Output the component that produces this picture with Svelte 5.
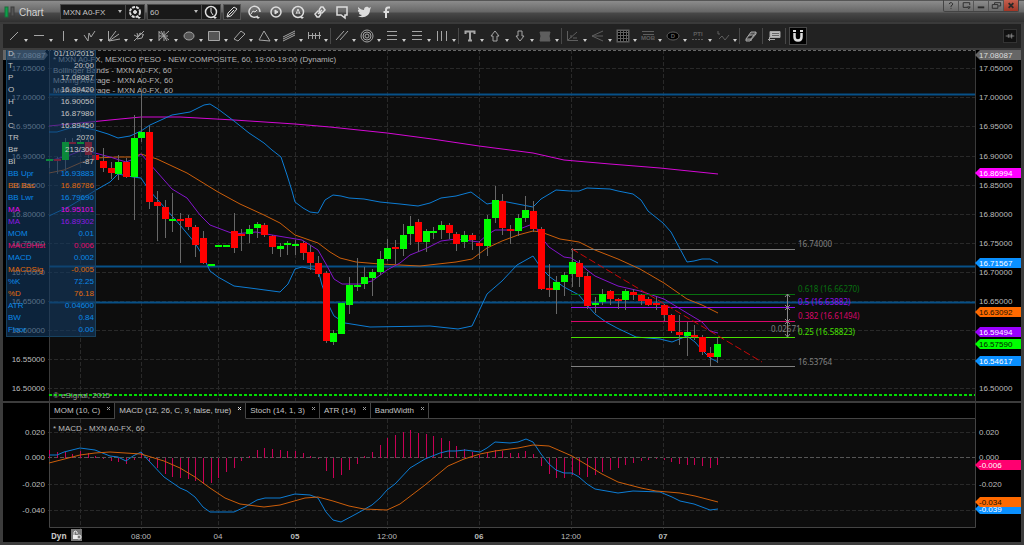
<script lang="ts">
  let symbol = $state('MXN A0-FX')
  let interval = $state('60')
  let activeTab = $state(1)
  let magnet = $state(true)

  const barX = (i: number) => 49.3 + i * 7.68

  const priceAxis = Array.from({ length: 12 }, (_, i) => ({
    label: (17.05 - i * 0.05).toFixed(5),
    y: Math.round(68.3 + i * 29.07),
  }))

  const times = [
    { label: '', x: 80, bold: false },
    { label: '08:00', x: 141, bold: false },
    { label: '04', x: 218, bold: false },
    { label: '05', x: 295, bold: true },
    { label: '12:00', x: 387, bold: false },
    { label: '06', x: 479, bold: true },
    { label: '12:00', x: 571, bold: false },
    { label: '07', x: 663, bold: true },
  ]

  // direction, high, body top, body bottom, low
  const candles: [number, number, number, number, number][] = [
    [1, 159, 159, 160, 168], [0, 157, 159, 160, 174], [1, 138, 142, 160, 171], [0, 138, 142, 143, 144],
    [1, 140, 142, 143, 144], [0, 138, 142, 155, 158], [0, 155, 155, 160, 160], [0, 148, 161, 168, 172],
    [0, 162, 168, 173, 179], [1, 155, 162, 174, 180], [0, 158, 162, 177, 178], [1, 115, 138, 177, 220],
    [1, 92, 132, 138, 142], [0, 126, 132, 202, 209], [0, 191, 202, 206, 241], [0, 200, 207, 219, 238],
    [1, 193, 219, 220, 232], [0, 213, 219, 220, 263], [0, 215, 218, 227, 230], [0, 225, 227, 245, 257],
    [0, 231, 238, 263, 264], [1, 264, 264, 265, 265], [1, 245, 245, 246, 246], [1, 245, 245, 246, 246],
    [0, 213, 231, 248, 253], [0, 229, 234, 235, 251], [1, 225, 229, 234, 243], [1, 222, 224, 228, 238],
    [0, 223, 225, 235, 237], [0, 235, 236, 247, 254], [1, 243, 246, 249, 257], [1, 241, 243, 244, 255],
    [1, 240, 244, 245, 255], [0, 241, 243, 253, 260], [0, 245, 252, 263, 270], [0, 256, 263, 274, 277],
    [0, 271, 273, 341, 343], [1, 330, 333, 342, 345], [1, 303, 303, 334, 334], [1, 277, 285, 305, 314],
    [1, 258, 285, 286, 291], [1, 267, 277, 284, 289], [1, 269, 272, 278, 296], [1, 251, 259, 272, 275],
    [1, 239, 248, 259, 261], [0, 240, 247, 249, 264], [1, 224, 235, 249, 256], [1, 216, 226, 234, 245],
    [0, 219, 222, 242, 252], [1, 229, 231, 242, 252], [1, 227, 231, 232, 239], [1, 221, 225, 230, 239],
    [0, 223, 225, 233, 239], [0, 232, 234, 244, 251], [1, 231, 235, 242, 248], [0, 233, 235, 240, 250],
    [0, 241, 243, 246, 259], [1, 215, 219, 246, 256], [1, 186, 200, 218, 223], [0, 194, 201, 228, 235],
    [0, 225, 229, 231, 244], [1, 214, 218, 231, 236], [1, 196, 210, 218, 222], [0, 201, 211, 229, 232],
    [0, 227, 229, 289, 290], [0, 264, 288, 289, 297], [1, 276, 282, 290, 314], [1, 272, 275, 282, 296],
    [1, 248, 262, 274, 287], [0, 260, 263, 277, 287], [0, 272, 276, 306, 309], [1, 297, 303, 305, 313],
    [1, 289, 294, 302, 305], [0, 290, 291, 299, 305], [0, 298, 299, 301, 309], [1, 289, 291, 300, 310],
    [0, 289, 292, 295, 300], [0, 294, 295, 301, 305], [0, 297, 299, 305, 306], [0, 297, 303, 305, 310],
    [0, 304, 305, 315, 321], [0, 314, 315, 331, 333], [0, 315, 332, 335, 345], [1, 322, 332, 336, 356],
    [0, 325, 335, 337, 340], [0, 335, 337, 352, 355], [0, 347, 353, 357, 366], [1, 338, 344, 357, 363],
  ]

  const curves = [
    { color: '#d408d4', points: '49,126 80,123 110,120 141,117 180,117 234,120 295,124 330,127 387,133 432,139 479,146 533,153 564,160 610,164 660,168 718,174' },
    { color: '#0c7cd4', points: '49,132 57,132 70,128 80,127 95,130 108,134 118,138 130,136 141,131 150,125 172,115 190,112 204,105 210,104 218,109 234,121 249,133 264,143 272,150 281,157 287,175 292,191 295,202 303,208 310,212 318,213 325,200 333,195 341,196 349,198 364,199 380,202 400,204 418,206 430,203 441,198 456,196 471,192 479,198 487,204 502,201 520,204.5 533,207 541,199 556,190 570,191 579,191 587,188 610,189 618,191 633,194 641,200 648,211 663,223 671,232 679,247 687,262 694,261 702,259 710,259 718,263' },
    { color: '#0c7cd4', points: '49,216 70,206 80,200 96,190 110,182 118,174 133,177 141,178 149,190 165,208 180,225 195,243 203,256 210,271 218,277 234,286 250,288 280,292 288,284 295,269 302,267 318,270 322,285 330,308 334,316 345,323 370,327 430,326 458,329 472,326 487,294 502,281 517,265 533,256 541,268 550,277 564,287 579,295 587,305 595,314 606,322 617,328 636,337 648,338 660,339 672,342 687,336 695,342 702,350 710,358 718,362' },
    { color: '#cc5e0a', points: '49,173 64,170 80,163 95,158 118,157 133,157 141,154 157,159 187,173 218,192 240,204 264,215 280,223 295,235 318,243 330,252 340,258 356,262 380,264 420,266 456,262 472,259 487,248 502,241 518,235 533,231 541,232 560,239 579,242 595,250 618,259 640,269 664,283 687,299 702,305 718,313' },
    { color: '#8414cc', points: '49,161 70,155 80,151 95,153 110,157 126,162 134,159 141,154 149,163 157,172 172,189 187,198 200,215 210,225 234,234 256,232 272,235 302,240 310,245 318,250 326,264 334,279 342,284 360,284 372,281 387,270 400,263 410,255 425,249 441,241 456,239 479,242 487,235 495,230 517,230 530,225 536,227 541,237 549,247 564,257 571,258 579,263 587,270 595,276 618,286 640,291 664,299 687,313 702,322 710,331 718,333' },
  ]

  const fibs = [
    { y: 249, color: '#808080', text: '16.74000', textY: 247 },
    { y: 294, color: '#087010', text: '0.618 (16.66270)', textY: 292 },
    { y: 307, color: '#9010f0', text: '0.5 (16.63882)', textY: 305 },
    { y: 321, color: '#d8066a', text: '0.382 (16.61494)', textY: 319 },
    { y: 337, color: '#48e000', text: '0.25 (16.58823)', textY: 335 },
    { y: 366, color: '#808080', text: '16.53764', textY: 365 },
  ]

  const tags = [
    { y: 55, color: '#666', ink: '#ddd', text: '17.08087' },
    { y: 173, color: '#f0f', ink: '#fff', text: '16.86994' },
    { y: 263, color: '#0a90ff', ink: '#fff', text: '16.71567' },
    { y: 312, color: '#ff6a00', ink: '#210', text: '16.63092' },
    { y: 332, color: '#9a00ff', ink: '#fff', text: '16.59494' },
    { y: 344, color: '#0f0', ink: '#020', text: '16.57590' },
    { y: 361, color: '#0a90ff', ink: '#fff', text: '16.54617' },
  ]

  const macdTags = [
    { y: 509, color: '#0a90ff', ink: '#fff', text: '-0.039' },
    { y: 502, color: '#ff6a00', ink: '#210', text: '-0.034' },
    { y: 465, color: '#ff0070', ink: '#fff', text: '-0.006' },
  ]

  const macdAxis = [
    { y: 432, label: '0.020' },
    { y: 457, label: '0.000' },
    { y: 484, label: '-0.020' },
    { y: 510, label: '-0.040' },
  ]

  const histogram = [
    450, 452, 452, 454, 451, 453, 456, 459, 461, 462, 464, 460, 453, 462, 468, 474, 477, 478, 479, 481, 484, 483,
    478, 472, 468, 461, 456, 450, 448, 449, 450, 451, 451, 453, 456, 459, 471, 478, 475, 470, 464, 456, 452, 445,
    438, 435, 432, 430, 433, 434, 436, 438, 441, 446, 449, 452, 455, 453, 450, 451, 453, 453, 451, 454, 466, 474,
    478, 478, 475, 475, 477, 475, 472, 470, 468, 465, 463, 461, 460, 459, 460, 462, 464, 465, 465, 466, 468, 465,
  ]

  const macdLine = '49,455 57,455 64,452 80,448 95,450 110,456 118,457 126,461 133,456 141,452 149,461 164,477 180,488 187,491 195,497 203,507 210,512 234,512 245,507 257,500 265,498 280,498 295,494 310,495 318,498 326,512 333,520 341,522 356,514 372,505 380,498 387,490 395,484 410,468 425,459 440,453 448,451 456,451 465,450 480,452 487,448 495,442 510,443 518,442 526,439 533,442 541,454 549,464 556,470 564,473 572,473 579,477 587,484 595,489 618,493 633,491 660,492 672,497 680,501 694,504 702,507 710,510 718,509'
  const signalLine = '49,463 80,455 95,453 110,452 141,454 164,461 180,468 195,477 210,488 225,498 240,504 264,507 280,505 305,498 318,497 333,501 349,506 364,509 387,510 400,504 425,485 448,466 464,459 480,454 495,451 510,449 518,448 533,445 549,446 556,449 572,456 587,465 602,474 618,482 641,488 656,491 680,493 695,496 718,502'

  const cursorRows = [
    ['D', '01/10/2015', 'plain'],
    ['T', '20:00', 'plain'],
    ['P', '17.08087', 'plain'],
    ['O', '16.89420', 'plain'],
    ['H', '16.90050', 'plain'],
    ['L', '16.87980', 'plain'],
    ['C', '16.89450', 'plain'],
    ['TR', '2070', 'plain'],
    ['B#', '213/300', 'plain'],
    ['BI', '-87', 'plain'],
    ['BB Upr', '16.93883', 'blue'],
    ['BB Bas', '16.86786', 'orange'],
    ['BB Lwr', '16.79690', 'blue'],
    ['MA', '16.95101', 'magenta'],
    ['MA', '16.89302', 'purple'],
    ['MOM', '0.01', 'blue'],
    ['MACDHist', '0.006', 'pink'],
    ['MACD', '0.002', 'blue'],
    ['MACDSig', '-0.005', 'orange'],
    ['%K', '72.25', 'blue'],
    ['%D', '76.18', 'orange'],
    ['ATR', '0.04600', 'blue'],
    ['BW', '0.84', 'blue'],
    ['Floor', '0.00', 'blue'],
  ]

  const tabs = ['MOM (10, C)', 'MACD (12, 26, C, 9, false, true)', 'Stoch (14, 1, 3)', 'ATR (14)', 'BandWidth']

  const studies = [
    '* MXN A0-FX, MEXICO PESO - NEW COMPOSITE, 60, 19:00-19:00 (Dynamic)',
    'Bollinger Bands - MXN A0-FX, 60',
    'Moving Average - MXN A0-FX, 60',
    'Moving Average - MXN A0-FX, 60',
  ]

  // each icon is drawn around (10, 10) in a 25 x 20 box
  const toolGroups = [
    [
      { name: 'Trend line', d: 'M6 14 14 6' },
      { name: 'Horizontal line', d: 'M5 9.5H15' },
      { name: 'Vertical line', d: 'M9.5 5V15' },
      { name: 'Zigzag', d: 'M5 9 9 15 10 7 12 11 16 5' },
      { name: 'Speed lines', d: 'M4.5 5V15L12 5M5 15 15 8M5 15 16 13' },
      { name: 'Pitchfork', d: 'M5 15 15 5M5 9 9 11 11 7 15 9M8 13 13 12 14 9M8 7 9 11' },
      { name: 'Gann fan', d: 'M10 5V15M5 6 15 14M5 14 15 5M5 10H14M7 5 13 15M5 5V15' },
      { name: 'Ellipse', d: 'M5 10A5 4 0 0 1 15 10A5 4 0 0 1 5 10Z', fill: true },
      { name: 'Rectangle', d: 'M4.5 5.5H15.5V14.5H4.5Z', fill: true },
      { name: 'Channel', d: 'M5 13 12 5 16 8 9 15Z' },
      { name: 'Triangle', d: 'M10 5 16 15 5 14Z' },
      { name: 'Regression', d: 'M4 11 16 5M4 13 16 7M4 15 16 9' },
      { name: 'Cycle', d: 'M4 9.5H17M4.5 6V13M8.5 7V13M11.5 7V13M15.5 6V13' },
    ],
    [
      { name: 'Parallel lines', d: 'M4 14 12 5M8 14 16 5' },
      { name: 'Fibonacci circles', d: 'M4 10A6 6 0 0 1 16 10A6 6 0 0 1 4 10ZM6 10A4 4 0 0 1 14 10A4 4 0 0 1 6 10ZM8 10A2 2 0 0 1 12 10A2 2 0 0 1 8 10Z' },
      { name: 'Fibonacci retracement', d: 'M5 5.5H15M5 9.5H15M5 13.5H15' },
      { name: 'Fibonacci extension', d: 'M5 5.5H15M5 9.5H15M5 13.5H15' },
      { name: 'Fibonacci time', d: 'M5.5 5V15M9.5 5V15M14.5 5V15' },
    ],
    [
      { name: 'Text', d: 'M5.5 8V5.5H14.5V8M10 6V14M8 14.5H12', bold: true },
      { name: 'Up arrow', d: 'M10 5 14 10H12V15H8V10H6Z' },
      { name: 'Down arrow', d: 'M10 15 14 10H12V5H8V10H6Z' },
      { name: 'Icon', d: 'M5 6H15L14 10 15 15H5L6 10Z', solid: true, dim: true },
    ],
    [
      { name: 'Gann angles', d: 'M4.5 5V14.5H15M5 14 14 6M8 9V12M10 12H14', dim: true },
      { name: 'Andrews fan', d: 'M15 5 4 10 15 15M4 10H15', dim: true },
      { name: 'Grid', d: 'M4.5 4V16M7.5 4V16M10.5 4V16M13.5 4V16M4 6.5H16M4 9.5H16M4 12.5H16M4 4.5H15.5V15.5H4', grid: true, dim: true },
      { name: 'Make or break', d: 'M4 5.5H16M5 8.5H16', text: 'MOB', dim: true },
      { name: 'Time and price', d: 'M4 10A6 4 0 0 1 16 10A6 4 0 0 1 4 10Z', text: 'D', grid: true, dim: true },
      { name: 'Profit taking index', d: 'M4 13.5H16', dashed: true, text: 'PTI', dim: true },
      { name: 'Wave labels', d: 'M5 5V8H7M6 13 9 10 12 14 16 9', dim: true },
    ],
  ]
</script>

{#snippet tag(t)}
  <polygon points="975,{t.y} 980,{t.y - 5} 1021,{t.y - 5} 1021,{t.y + 5} 980,{t.y + 5}" fill={t.color} />
  <text x="979" y={t.y + 3} fill={t.ink}>{t.text}</text>
{/snippet}

<div class="window">
  <header class="titlebar">
    <svg class="logo" viewBox="0 0 12 12">
      <rect x="1" y="1" width="3" height="10" fill="#0aa24a" stroke="#1c6b3b" />
      <rect x="7" y="1" width="3" height="9" fill="#555" stroke="#3b3b3b" />
    </svg>
    <h1>Chart</h1>
    <div class="picker symbol">
      <select bind:value={symbol} aria-label="Symbol"><option>MXN A0-FX</option></select>
      <svg class="down" viewBox="0 0 6 4"><path d="M1 0H5L3 3Z" /></svg>
      <button aria-label="Symbol settings">
        <svg viewBox="0 0 18 16">
          <circle cx="9" cy="8" r="5" stroke-width="2" stroke-dasharray="3 1" /><circle cx="9" cy="8" r="1.5" class="solid" />
          <path class="solid" d="M11 13H15L13 15Z" stroke="none" />
        </svg>
      </button>
    </div>
    <div class="picker interval">
      <select bind:value={interval} aria-label="Interval"><option>60</option></select>
      <svg class="down" viewBox="0 0 6 4"><path d="M1 0H5L3 3Z" /></svg>
      <button aria-label="Time template">
        <svg viewBox="0 0 18 16">
          <circle cx="9" cy="8" r="5.5" stroke-width="1.5" /><path d="M9 4V8L11 11" />
          <path class="solid" d="M11 13H15L13 15Z" stroke="none" />
        </svg>
      </button>
    </div>
    <div class="actions">
      <button class="framed" aria-label="Draw">
        <svg viewBox="0 0 18 16"><path d="M4 13 5 9 11 3 14 5 8 12ZM5 12 11 6" /></svg>
      </button>
      <button aria-label="Studies">
        <svg viewBox="0 0 18 16"><path d="M13 12A5.5 5.5 0 1 1 15 8" stroke-width="1.5" /><path d="M6 10 8 7 10 8 12 6" /><path class="solid" d="M11 13H15L13 15Z" stroke="none" /></svg>
      </button>
      <button aria-label="Replay">
        <svg viewBox="0 0 18 16"><circle cx="9" cy="8" r="5" stroke-width="1.5" /><path class="solid" d="M8 6 11 8 8 10Z" /></svg>
      </button>
      <button aria-label="Alerts">
        <svg viewBox="0 0 18 16"><circle cx="9" cy="8" r="5.5" stroke-width="1.5" /><path d="M7 10 9 5 11 10M8 9H10" /><path class="solid" d="M11 13H15L13 15Z" stroke="none" /></svg>
      </button>
      <button aria-label="Link">
        <svg viewBox="0 0 18 16"><path d="M9 7 7 7 4 10 6 13 8 13 10 10M8 9 11 9 14 6 12 3 10 3 8 6M7 10 11 6" stroke-width="1.5" /></svg>
      </button>
      <button aria-label="Comment">
        <svg viewBox="0 0 18 16"><path d="M4 3H14V11H12V14L8 11H4Z" stroke-width="1.5" /></svg>
      </button>
      <button aria-label="Twitter">
        <svg viewBox="0 0 18 16"><path class="solid" stroke="none" d="M3 3C5 5 7 6 9 6C9 2 13 2 14 4L16 3L15 6C15 12 8 15 3 12C5 12 6 12 7 11C5 11 4 10 4 9H5C3 8 3 7 3 6L4 6C3 5 3 4 3 3Z" /></svg>
      </button>
      <button aria-label="Facebook">
        <svg viewBox="0 0 18 16"><path d="M13 3.5H11Q9 3.5 9 6V14M6.5 8H12" stroke-width="2" /></svg>
      </button>
    </div>
    <div class="controls">
      <button aria-label="Help"><svg viewBox="0 0 15 11"><path d="M5.5 4Q6 2 8 2.5T9 5L7.5 6V7M7.5 8V9" /></svg></button>
      <button aria-label="Detach"><svg viewBox="0 0 15 11"><path d="M9 7.5H4.5V2.5H11.5V5M9 7H12L10.5 9Z" /></svg></button>
      <button aria-label="Minimize"><svg viewBox="0 0 15 11"><path d="M4 7.5H11" stroke-width="2" /></svg></button>
      <button aria-label="Restore"><svg viewBox="0 0 15 11"><path d="M6 4V2.5H12.5V6H10M3.5 4.5H9.5V8.5H3.5Z" /></svg></button>
      <button class="close" aria-label="Close"><svg viewBox="0 0 15 11"><path d="M5 3 10 8M10 3 5 8" stroke-width="2" /></svg></button>
    </div>
  </header>

  <nav class="toolbar" aria-label="Drawing tools">
    {#each toolGroups as group}
      {#each group as tool}
        <button class="tool" aria-label={tool.name}>
          <svg viewBox="0 0 25 20">
            <g class:dim={tool.dim}>
              {#if tool.grid && !tool.text}<rect x="4" y="4" width="12" height="12" fill="#000" />{/if}
              <path
                d={tool.d}
                stroke-width={tool.bold ? 2 : 1}
                stroke-dasharray={tool.dashed ? '2 1' : null}
                class:shade={tool.fill}
                class:solid={tool.solid}
                class:black={tool.text && tool.grid}
              />
              {#if tool.text}<text x="10" y={tool.text === 'MOB' ? 14 : tool.text === 'PTI' ? 10 : 12}>{tool.text}</text>{/if}
            </g>
            <path class="caret" d="M20 13H24L22 16Z" />
          </svg>
        </button>
      {/each}
      <span class="sep"></span>
    {/each}
    <button class="tool short" aria-label="Erase">
      <svg viewBox="0 0 20 20"><path class="shade" d="M5 13 10 6H15L10 13ZM5 13V15H9L15 8V6M10 13V15M8 9H13" /></svg>
    </button>
    <span class="sep"></span>
    <button class="tool short" aria-label="Properties">
      <svg viewBox="0 0 20 20"><path d="M6 5.5H16V11.5H6Z" fill="#bbb" /><path d="M8 7.5H15M8 9.5H15" stroke="#666" /><path d="M4 13.5H8M5.5 11V15M8 13.5H11" /></svg>
    </button>
    <span class="sep"></span>
    <button class="magnet" class:on={magnet} aria-label="Magnet" aria-pressed={magnet} onclick={() => (magnet = !magnet)}>
      <svg viewBox="0 0 16 16"><path d="M4.5 5V9Q4.500 12.5 8 12.5T11.5 9V5" stroke-width="2.5" /><path d="M3 3H6M10 3H13" stroke-width="2" /></svg>
    </button>
    <button class="pin" aria-label="Pin toolbar">
      <svg viewBox="0 0 14 14"><path d="M2 7H5M5 5V9M5 6H9V8H5M9 4V10M9 7H12" /></svg>
    </button>
  </nav>

  <main>
    <section class="chart">
      <svg viewBox="3 50 1018 351" role="img" aria-label="{symbol} price chart">
        <rect x="49" y="50" width="926" height="351" fill="#0d0d0d" />
        <g class="grid">
          {#each priceAxis as p}<line x1="48" x2="977" y1={p.y + 0.5} y2={p.y + 0.5} />{/each}
          {#each times as t}<line x1={t.x + 0.5} x2={t.x + 0.5} y1="50" y2="401" />{/each}
        </g>
        <line x1="3" x2="975" y1="50.5" y2="50.5" stroke="#666" stroke-dasharray="3 2" />
        <path d="M49.5 50V401M975.5 50V401" stroke="#3a3a3a" />
        <g class="labels">
          {#each priceAxis as p}
            <text x="45" y={p.y + 3} text-anchor="end">{p.label}</text>
            <text x="979" y={p.y + 3}>{p.label}</text>
          {/each}
        </g>
        <polygon points="3,50 44,50 48,55 44,60 3,60" fill="#666" />
        <text x="12" y="58" fill="#ddd">17.08087</text>

        <g fill="#b4b4b4">
          {#each studies as study, i}<text x="53" y={62 + i * 11 - (i > 1 ? i - 1 : 0)}>{study}</text>{/each}
        </g>
        <path d="M49 94.5H975M49 266.5H975M49 302.5H975" stroke="#075087" stroke-width="2" />
        <line x1="49" x2="975" y1="395" y2="395" stroke="#00dc00" stroke-width="2" stroke-dasharray="3 2" />
        <text x="53" y="398" fill="#999">© eSignal, 2015</text>

        {#each curves as c}<polyline class="curve" points={c.points} stroke={c.color} />{/each}

        {#each fibs as f}
          <line x1="571" x2="795" y1={f.y + 0.5} y2={f.y + 0.5} stroke={f.color} />
          <text class="fib" x="798" y={f.textY} fill={f.color}>{f.text}</text>
        {/each}
        <path d="M787.5 294V337M785 297 787.5 294 790 297M785 305 790 310M790 305 785 310M785 319 790 324M790 319 785 324M785 334 787.5 337 790 334" fill="none" stroke="#888" />
        <text class="fib" x="771" y="332" fill="#808080">0.02671</text>

        <g shape-rendering="crispEdges">
          {#each candles as [up, high, top, bottom, low], i}
            {@const x = Math.round(barX(i))}
            <rect {x} y={high} width="1" height={low - high} fill="#686868" />
            <rect x={x - 3} y={top} width="7" height={Math.max(bottom - top, 2)} fill={up ? '#00ff00' : '#ff0000'} />
          {/each}
        </g>
        <line x1="572" y1="249" x2="762" y2="362" stroke="#c80808" stroke-dasharray="7 3" />
        {#each tags as t}{@render tag(t)}{/each}
      </svg>

      <table class="cursor">
        <tbody>
          {#each cursorRows as [name, value, tone]}
            <tr class={tone}><th scope="row">{name}</th><td>{value}</td></tr>
          {/each}
        </tbody>
      </table>
    </section>

    <div class="tabs" role="tablist">
      {#each tabs as name, i}
        <div class="tab" class:active={activeTab === i}>
          <button class="name" role="tab" aria-selected={activeTab === i} onclick={() => (activeTab = i)}>{name}</button>
          <button class="x" aria-label="Close {name}"><svg viewBox="0 0 5 5"><path d="M1 1 4 4M4 1 1 4" /></svg></button>
        </div>
      {/each}
      <span class="rest"></span>
      <span class="axis-gap"></span>
    </div>

    <section class="chart">
      <svg viewBox="3 419 1018 123" role="img" aria-label="MACD chart">
        <rect x="49" y="419" width="926" height="108" fill="#0d0d0d" />
        <g class="grid">
          {#each macdAxis as p}<line class:zero={p.y === 457} x1="48" x2="977" y1={p.y + 0.5} y2={p.y + 0.5} />{/each}
          {#each times as t}<line x1={t.x + 0.5} x2={t.x + 0.5} y1="419" y2="529" />{/each}
        </g>
        <path d="M49.5 419V527.5H975.5V419" fill="none" stroke="#444" />
        <g class="labels">
          {#each macdAxis as p}
            <text x="45" y={p.y + 3} text-anchor="end">{p.label}</text>
            <text x="979" y={p.y + 3}>{p.label}</text>
          {/each}
          {#each times as t}
            <text x={t.x} y="539" text-anchor="middle" class:bold={t.bold}>{t.label}</text>
          {/each}
          <text x="53" y="431">* MACD - MXN A0-FX, 60</text>
        </g>
        <g shape-rendering="crispEdges" fill="#c80056">
          {#each histogram as y, i}
            <rect x={Math.round(barX(i))} y={Math.min(y, 458)} width="1" height={Math.abs(y - 458)} />
          {/each}
        </g>
        <polyline class="curve" points={macdLine} stroke="#0c7cd4" />
        <polyline class="curve" points={signalLine} stroke="#cc5e0a" />
        {#each macdTags as t}{@render tag(t)}{/each}
      </svg>
      <div class="scale-mode">
        <span>Dyn</span>
        <button aria-label="Lock scale">
          <svg viewBox="0 0 11 12"><path d="M3 6V3Q4 1 6 3V5" fill="none" stroke="#eee" /><path d="M2 6H7V10H2Z" fill="#eee" /><circle cx="8" cy="8" r="2" fill="#777" stroke="#eee" /></svg>
        </button>
      </div>
    </section>
  </main>
</div>

<style>
  :global(body) {
    margin: 0;
    background: #3c3c3c;
  }

  .window {
    font-family: "Liberation Sans", Arial, sans-serif;
    font-size: 8px;
    color: #c4c4c4;
    background: #3c3c3c;
  }

  button {
    display: flex;
    align-items: center;
    justify-content: center;
    flex-shrink: 0;
    padding: 0;
    border: 0;
    background: none;
    color: inherit;
    font: inherit;
    cursor: pointer;
  }

  button svg {
    display: block;
    fill: none;
    stroke: currentColor;
  }

  .titlebar {
    display: flex;
    align-items: flex-start;
    height: 24px;
    box-sizing: border-box;
    padding: 4px 3px 0 4px;
    border-top: 1px solid #555;
    border-bottom: 2px solid #3a3a3a;
    background: linear-gradient(#8c8c8c, #666 11px, #484848 12px, #303030);
  }

  .logo {
    width: 12px;
    height: 12px;
    margin-top: 1px;
  }

  h1 {
    margin: 0 0 0 3px;
    width: 41px;
    font-size: 10px;
    font-weight: 400;
    line-height: 15px;
    color: #d4d4d4;
  }

  .picker {
    display: flex;
    align-items: center;
    height: 16px;
    box-sizing: border-box;
    margin-top: -1px;
    margin-right: 2px;
    border: 1px solid #4a4a4a;
    background: #191919;
  }

  .symbol {
    width: 85px;
  }

  .interval {
    width: 74px;
  }

  select {
    appearance: none;
    flex: 1;
    min-width: 0;
    height: 14px;
    padding: 0 2px;
    border: 0;
    background: none;
    color: #c4c4c4;
    font: inherit;
  }

  .down {
    width: 6px;
    height: 4px;
    margin-right: 2px;
    fill: #bbb;
  }

  .picker button {
    border-left: 1px solid #4a4a4a;
    color: #ddd;
  }

  .picker button svg {
    width: 18px;
    height: 16px;
  }

  .solid {
    fill: currentColor;
  }

  .actions {
    display: flex;
    gap: 4px;
    margin-top: -1px;
    color: #ddd;
  }

  .actions svg {
    width: 18px;
    height: 16px;
  }

  .framed {
    background: #2a2a2a;
    outline: 1px solid #555;
    outline-offset: -1px;
  }

  .controls {
    display: flex;
    margin: -5px 2px 0 auto;
    border: 1px solid #444;
    border-top: 0;
    border-radius: 0 0 2px 2px;
    color: #2a2a2a;
  }

  .controls svg {
    width: 14px;
    height: 11px;
  }

  .controls button + button {
    border-left: 1px solid #555;
  }

  .controls .close {
    background: linear-gradient(#c4604e, #a03626);
  }

  .toolbar {
    display: flex;
    align-items: center;
    height: 24px;
    margin: 0 3px;
    padding-left: 1px;
    background: #222;
  }

  .tool {
    color: #a5a5a5;
  }

  .tool svg {
    width: 25px;
    height: 20px;
  }

  .tool.short svg {
    width: 20px;
  }

  .tool text {
    font-size: 6px;
    font-weight: 700;
    text-anchor: middle;
    fill: currentColor;
    stroke: none;
  }

  .dim {
    color: #5e5e5e;
    stroke: currentColor;
  }

  .shade {
    fill: #555;
  }

  .black {
    fill: #000;
  }

  .caret {
    fill: #ccc;
    stroke: none;
  }

  .sep {
    width: 1px;
    height: 16px;
    margin: 0 1px;
    background: #484848;
  }

  .magnet {
    margin-left: 2px;
    border: 1px solid #484848;
    color: #ddd;
  }

  .magnet.on {
    background: #000;
  }

  .magnet svg {
    width: 16px;
    height: 16px;
  }

  .pin {
    margin: 0 4px 0 auto;
    background: #111;
    border: 1px solid #333;
    color: #888;
  }

  .pin svg {
    width: 12px;
    height: 12px;
  }

  main {
    margin-top: 2px;
    border: 3px solid #3c3c3c;
    border-top: 0;
    background: #000;
  }

  .chart {
    position: relative;
    overflow: hidden;
  }

  .chart > svg {
    display: block;
    width: 100%;
  }

  .chart > svg text {
    font-size: 8px;
  }

  .chart > svg .fib {
    font-family: "Noto Sans", sans-serif;
  }

  .chart > svg .bold {
    font-weight: 700;
  }

  .grid line {
    stroke: #292929;
    stroke-dasharray: 4 2;
  }

  .grid .zero {
    stroke: #555;
  }

  .labels {
    fill: #bcbcbc;
  }

  .curve {
    fill: none;
    stroke-width: 1;
  }

  .cursor {
    position: absolute;
    top: -3px;
    left: 3px;
    width: 90px;
    border: 1px solid #17415f;
    border-spacing: 0;
    background: rgba(20, 58, 98, 0.6);
  }

  .cursor th,
  .cursor td {
    height: 12px;
    padding: 0 1px;
    line-height: 12px;
    font-weight: 400;
    text-align: left;
  }

  .cursor td {
    text-align: right;
  }

  .blue {
    color: #0a88e8;
  }

  .orange {
    color: #e06a0c;
  }

  .magenta {
    color: #e80ae8;
  }

  .purple {
    color: #9018e4;
  }

  .pink {
    color: #e80a6c;
  }

  .tabs {
    display: flex;
    height: 16px;
    padding-left: 46px;
    border-top: 2px solid #3c3c3c;
  }

  .tab {
    display: flex;
    align-items: flex-start;
    gap: 6px;
    padding: 0 3px 0 4px;
    border-right: 1px solid #444;
    border-bottom: 1px solid #444;
  }

  .tab:first-child {
    border-left: 1px solid #444;
  }

  .tab.active {
    background: #0d0d0d;
    border-bottom-color: #0d0d0d;
  }

  .name {
    height: 15px;
    white-space: nowrap;
  }

  .x {
    margin-top: 3px;
    color: #999;
  }

  .active .x {
    color: #ddd;
  }

  .x svg {
    width: 5px;
    height: 5px;
  }

  .rest {
    flex: 1;
    border-bottom: 1px solid #444;
  }

  .axis-gap {
    width: 45px;
    border-left: 1px solid #333;
  }

  .scale-mode {
    position: absolute;
    left: 48px;
    bottom: 1px;
    display: flex;
    align-items: center;
    gap: 4px;
    font: 700 8px "Noto Sans", sans-serif;
  }

  .scale-mode button {
    background: #777;
  }

  .scale-mode svg {
    width: 11px;
    height: 12px;
    stroke: none;
  }
</style>
